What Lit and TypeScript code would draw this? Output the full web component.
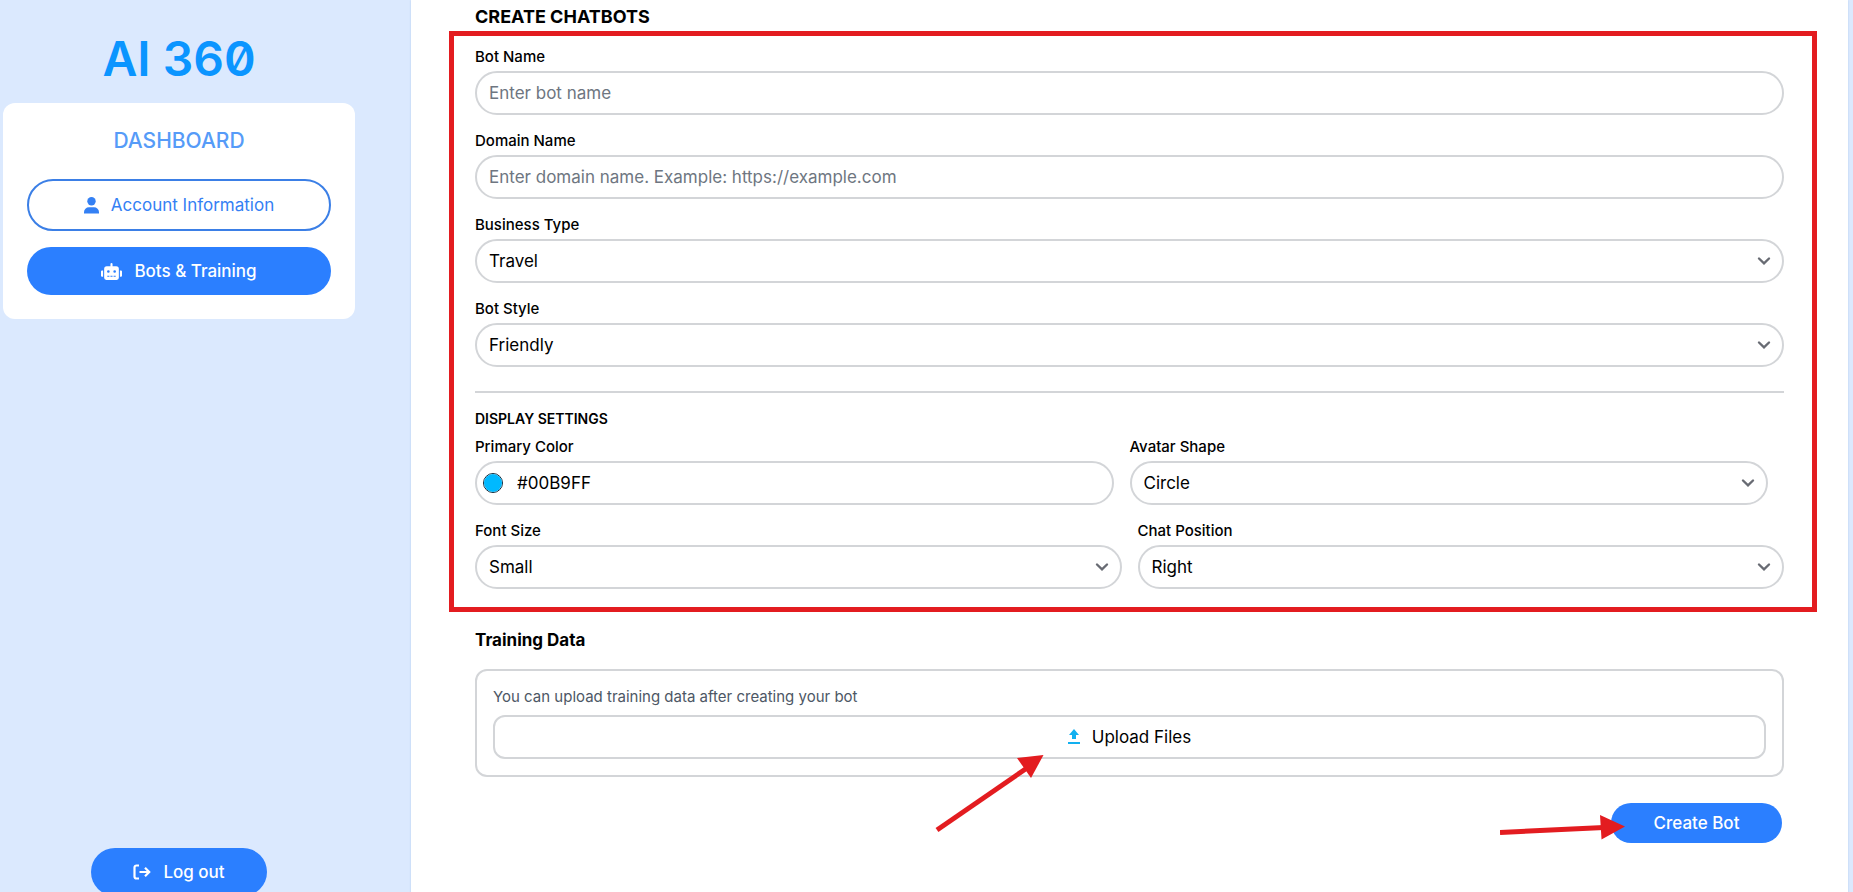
import { LitElement, html, css, svg } from "lit";
import { customElement, property } from "lit/decorators.js";

const chevron = svg`<path d="M1 1.500 6 6.300l5-4.800" fill="none" stroke="currentColor" stroke-width="2.400" stroke-linecap="round"/>`;

@customElement("bot-sidebar")
class BotSidebar extends LitElement {
  static styles = css`
    :host {
      display: flex;
      flex-direction: column;
      align-items: center;
      box-sizing: border-box;
      padding: 31px 56px 12px 3px;
      background: #dbe9fe;
    }
    .logo {
      font-size: 48px;
      line-height: 56px;
      font-weight: 600;
      font-feature-settings: "zero";
      color: #0b95ff;
      margin-bottom: 16px;
    }
    .card {
      align-self: stretch;
      display: flex;
      flex-direction: column;
      padding: 24px;
      background: #fff;
      border-radius: 12px;
    }
    .heading {
      margin: 0 0 24px;
      font-size: 21px;
      line-height: 28px;
      font-weight: 500;
      text-align: center;
      color: #569bf8;
    }
    .item {
      display: flex;
      align-items: center;
      justify-content: center;
      gap: 12px;
      box-sizing: border-box;
      height: 48px;
      border: 0;
      border-radius: 26px;
      background: #2b7fff;
      color: #fff;
      font: 500 17px/24px Inter, sans-serif;
      text-decoration: none;
    }
    .outline {
      height: 52px;
      margin-bottom: 16px;
      border: 2px solid #3b7fe6;
      background: #fff;
      color: #3480f4;
      font-weight: 400;
    }
    .logout {
      width: 176px;
      margin-top: auto;
    }
    svg {
      display: block;
      fill: currentColor;
    }
  `;

  render() {
    return html`
      <div class="logo">AI 360</div>
      <nav class="card">
        <h2 class="heading">DASHBOARD</h2>
        <a class="item outline" href="#account">
          <svg width="15" height="17" viewBox="0 0 15 17"><circle cx="7.5" cy="4.2" r="4.2"/><path d="M0 16.5v-1.2A5 5 0 0 1 5 10.3h5a5 5 0 0 1 5 5v1.2z"/></svg>
          Account Information
        </a>
        <a class="item" href="#bots" aria-current="page">
          <svg width="21" height="17" viewBox="0 0 640 512"><path d="M32 224h32v192H32a32 32 0 0 1-32-32V256a32 32 0 0 1 32-32zm512-48v272a64 64 0 0 1-64 64H160a64 64 0 0 1-64-64V176a80 80 0 0 1 80-80h112V32a32 32 0 0 1 64 0v64h112a80 80 0 0 1 80 80zM264 256a40 40 0 1 0-80 0 40 40 0 0 0 80 0zm-8 128h-64v32h64zm96 0h-64v32h64zm104-128a40 40 0 1 0-80 0 40 40 0 0 0 80 0zm-8 128h-64v32h64zm192-128v128a32 32 0 0 1-32 32h-32V224h32a32 32 0 0 1 32 32z"/></svg>
          Bots &amp; Training
        </a>
      </nav>
      <button class="item logout" type="button">
        <svg width="18" height="16" viewBox="0 0 18 16"><path d="M6 1.5H3.500a2 2 0 0 0-2 2v9a2 2 0 0 0 2 2H6M6.500 8H16M12 3.800 16.200 8 12 12.200" fill="none" stroke="currentColor" stroke-width="2.200"/></svg>
        Log out
      </button>
    `;
  }
}

@customElement("select-field")
class SelectField extends LitElement {
  @property() label = "";
  @property({ attribute: false }) options: string[] = [];

  static styles = css`
    :host {
      display: flex;
      flex-direction: column;
      gap: 4px;
      min-width: 0;
    }
    label {
      font-size: 15px;
      line-height: 20px;
      font-weight: 500;
    }
    .control {
      display: grid;
      align-items: center;
      justify-items: end;
    }
    select,
    svg {
      grid-area: 1 / 1;
    }
    select {
      appearance: none;
      box-sizing: border-box;
      width: 100%;
      height: 44px;
      padding: 0 40px 0 12px;
      border: 2px solid #d3d5d8;
      border-radius: 22px;
      background: #fff;
      color: #000;
      font: 400 17px/24px Inter, sans-serif;
    }
    svg {
      margin-right: 14px;
      color: #686b73;
      overflow: visible;
      pointer-events: none;
    }
  `;

  render() {
    return html`
      <label for="choice">${this.label}</label>
      <div class="control">
        <select id="choice">${this.options.map((o) => html`<option>${o}</option>`)}</select>
        <svg width="12" height="8" viewBox="0 0 12 8">${chevron}</svg>
      </div>
    `;
  }
}

@customElement("app-root")
class AppRoot extends LitElement {
  static styles = css`
    :host {
      display: block;
      height: 100vh;
      overflow: hidden;
      background: #dbe9fe;
      color: #000;
      font-family: Inter, sans-serif;
    }
    .page {
      display: grid;
      grid-template-columns: 411px minmax(0, 1fr);
      min-height: calc(100vh + 16px);
      padding-right: 5px;
    }
    main {
      box-sizing: border-box;
      padding: 3px 64px 0;
      background: #fff;
      box-shadow: 0 0 2px #b4cdee;
    }
    .title {
      margin: 0 0 16px;
      font-size: 18px;
      line-height: 28px;
      font-weight: 700;
    }
    .settings {
      position: relative;
      display: flex;
      flex-direction: column;
      gap: 16px;
    }
    .field {
      display: flex;
      flex-direction: column;
      gap: 4px;
      min-width: 0;
    }
    label {
      font-size: 15px;
      line-height: 20px;
      font-weight: 500;
    }
    .text,
    .color {
      box-sizing: border-box;
      width: 100%;
      height: 44px;
      padding: 0 12px;
      border: 2px solid #d3d5d8;
      border-radius: 22px;
      background: #fff;
      font: 400 17px/24px Inter, sans-serif;
      color: #000;
    }
    .text::placeholder {
      color: #6e7681;
      opacity: 1;
    }
    .color {
      display: flex;
      align-items: center;
      gap: 14px;
      padding: 0 12px 0 6px;
    }
    .swatch {
      appearance: none;
      box-sizing: border-box;
      width: 20px;
      height: 20px;
      padding: 0;
      border: 1px solid #10293a;
      border-radius: 50%;
      background: #00b9ff;
      overflow: hidden;
    }
    .swatch::-webkit-color-swatch-wrapper {
      padding: 0;
    }
    .swatch::-webkit-color-swatch {
      border: 0;
    }
    .hex {
      flex: 1;
      min-width: 0;
      padding: 0;
      border: 0;
      background: none;
      font: inherit;
      color: inherit;
    }
    .rule {
      width: 100%;
      height: 2px;
      margin: 8px 0 0;
      border: 0;
      background: #d3d5d8;
    }
    .subtitle {
      margin: 0 0 -8px;
      font-size: 14px;
      line-height: 20px;
      font-weight: 600;
    }
    .pair {
      display: grid;
      grid-template-columns: 1fr 1fr;
      gap: 16px;
    }
    .inset {
      padding-right: 16px;
    }
    .highlight {
      position: absolute;
      inset: -16px -33px -23px -26px;
      border: 5px solid #e31c20;
      pointer-events: none;
    }
    .training {
      margin: 39px 0 17px;
      font-size: 17px;
      line-height: 24px;
      font-weight: 700;
    }
    .panel {
      display: flex;
      flex-direction: column;
      gap: 8px;
      padding: 16px;
      border: 2px solid #d3d5d8;
      border-radius: 12px;
    }
    .hint {
      margin: 0;
      font-size: 15px;
      line-height: 20px;
      color: #4d5765;
    }
    .anchor {
      position: relative;
      display: flex;
    }
    .upload {
      flex: 1;
      display: flex;
      align-items: center;
      justify-content: center;
      gap: 12px;
      box-sizing: border-box;
      height: 44px;
      border: 2px solid #d3d5d8;
      border-radius: 12px;
      background: #fff;
      font: 400 17px/24px Inter, sans-serif;
      color: #000;
    }
    .upload svg {
      fill: #12b0f0;
    }
    .actions {
      display: flex;
      justify-content: flex-end;
      padding: 26px 2px 0;
    }
    .create {
      width: 171px;
      height: 40px;
      padding: 0;
      border: 0;
      border-radius: 20px;
      background: #2b7fff;
      color: #fff;
      font: 500 17px/24px Inter, sans-serif;
    }
    .arrow {
      position: absolute;
      fill: #e31c20;
      stroke: #e31c20;
      pointer-events: none;
    }
    .to-upload {
      left: calc(50% - 200px);
      top: 36px;
    }
    .to-create {
      left: -111px;
      top: 8px;
    }
  `;

  render() {
    return html`
      <div class="page">
        <bot-sidebar></bot-sidebar>
        <main>
          <h1 class="title">CREATE CHATBOTS</h1>
          <section class="settings">
            <div class="field">
              <label for="bot">Bot Name</label>
              <input class="text" id="bot" placeholder="Enter bot name" />
            </div>
            <div class="field">
              <label for="domain">Domain Name</label>
              <input class="text" id="domain" placeholder="Enter domain name. Example: https://example.com" />
            </div>
            <select-field label="Business Type" .options=${["Travel"]}></select-field>
            <select-field label="Bot Style" .options=${["Friendly"]}></select-field>
            <hr class="rule" />
            <h2 class="subtitle">DISPLAY SETTINGS</h2>
            <div class="pair inset">
              <div class="field">
                <label for="hex">Primary Color</label>
                <div class="color">
                  <input class="swatch" type="color" value="#00b9ff" aria-label="Pick color" />
                  <input class="hex" id="hex" value="#00B9FF" />
                </div>
              </div>
              <select-field label="Avatar Shape" .options=${["Circle"]}></select-field>
            </div>
            <div class="pair">
              <select-field label="Font Size" .options=${["Small"]}></select-field>
              <select-field label="Chat Position" .options=${["Right"]}></select-field>
            </div>
            <div class="highlight"></div>
          </section>
          <h2 class="training">Training Data</h2>
          <section class="panel">
            <p class="hint">You can upload training data after creating your bot</p>
            <div class="anchor">
              <button class="upload" type="button">
                <svg width="12" height="16" viewBox="0 0 12 16"><path d="M6 0l5 6H8v4H4V6H1zM0 13h12v2H0z"/></svg>
                Upload Files
              </button>
              <svg class="arrow to-upload" width="120" height="84" viewBox="0 0 120 84"><path d="M7 79 97 17" fill="none" stroke-width="5"/><path d="M113.500 4 101 27 87 7z" stroke="none"/></svg>
            </div>
          </section>
          <div class="actions">
            <div class="anchor">
              <button class="create" type="button">Create Bot</button>
              <svg class="arrow to-create" width="130" height="32" viewBox="0 0 130 32"><path d="M0 21.500 104 16.500" fill="none" stroke-width="5"/><path d="M125 15.500 101.500 28.500 100 4z" stroke="none"/></svg>
            </div>
          </div>
        </main>
      </div>
    `;
  }
}
